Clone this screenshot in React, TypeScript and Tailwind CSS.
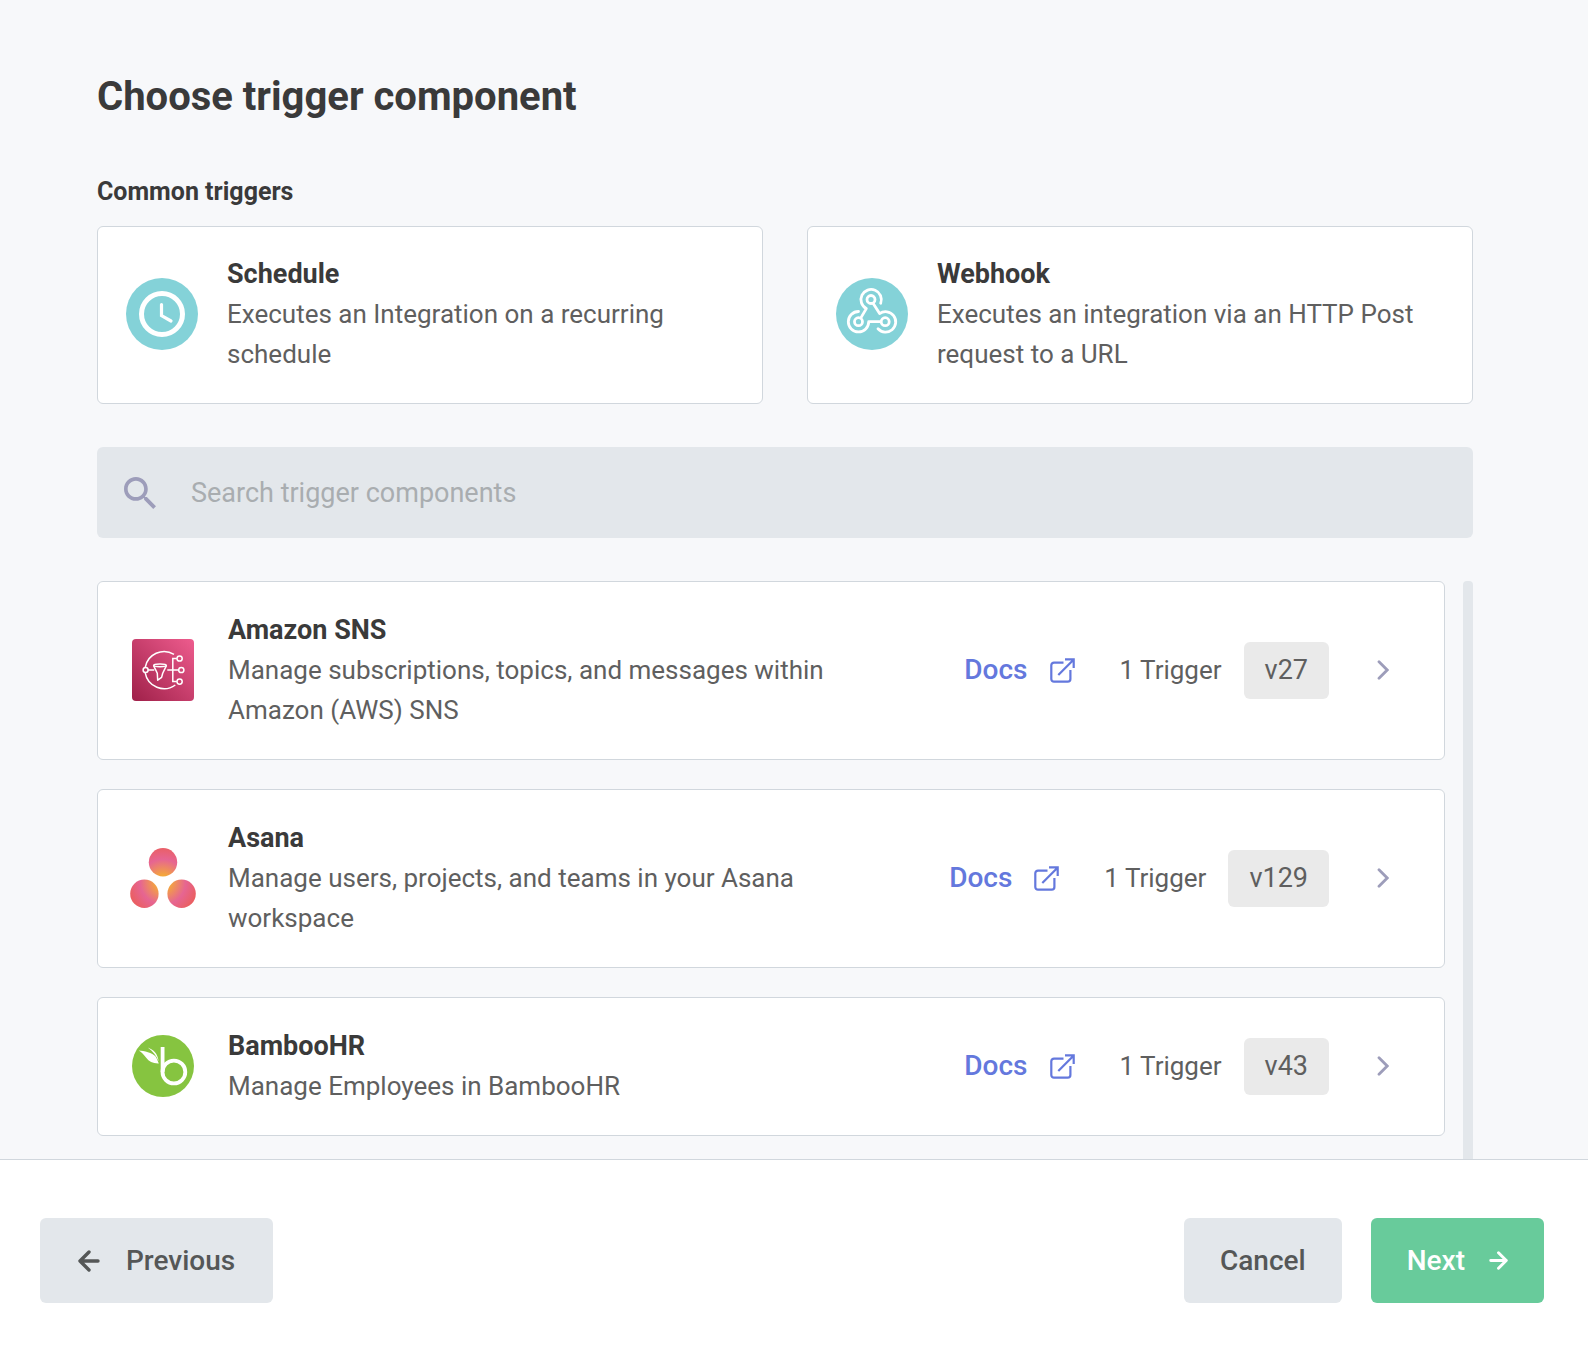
import type { ReactNode } from "react";

function ScheduleIcon() {
  return (
    <svg viewBox="0 0 72 72" className="size-[72px]" fill="none" aria-hidden="true">
      <circle cx="36" cy="36" r="36" fill="#84d2d8" />
      <circle cx="36" cy="36" r="20.5" stroke="#fff" strokeWidth="5" />
      <path d="M35.5 26.5V37.6L45 43" stroke="#fff" strokeWidth="3.2" strokeLinecap="round" />
    </svg>
  );
}

function WebhookIcon() {
  return (
    <svg viewBox="0 0 72 72" className="size-[72px]" fill="none" aria-hidden="true">
      <circle cx="36" cy="36" r="36" fill="#84d2d8" />
      <g stroke="#fff" strokeWidth="2.8" strokeLinecap="round" strokeLinejoin="round">
        <circle cx="35" cy="21.5" r="4" />
        <circle cx="22.5" cy="43.7" r="4" />
        <circle cx="49.2" cy="43.7" r="4" />
        <path d="M44.7 25.2A10.2 10.2 0 1 0 30.3 30.6L25 39.6" />
        <path d="M37.2 25.4L43.6 35.6A10.2 10.2 0 1 1 42 50.8" />
        <path d="M22.5 33.5A10.2 10.2 0 1 0 32.7 43.7H44.8" />
      </g>
    </svg>
  );
}

function SnsIcon() {
  return (
    <svg viewBox="0 0 62 62" className="size-[62px]" fill="none" aria-hidden="true">
      <defs>
        <linearGradient id="sns" x1="0" y1="62" x2="62" y2="0" gradientUnits="userSpaceOnUse">
          <stop stopColor="#9f2049" />
          <stop offset="1" stopColor="#ee5c8e" />
        </linearGradient>
      </defs>
      <rect width="62" height="62" rx="4" fill="url(#sns)" />
      <g stroke="#fff" strokeWidth="1.5">
        <path d="M42 15.3A19.2 19.2 0 0 0 13.2 28.4M13.2 33.8A19.2 19.2 0 0 0 43.3 46" />
        <circle cx="13.6" cy="31" r="2.5" />
        <path d="M16.1 31H22.3M35.3 31H46.5M44.8 19.5H40.8V42.6H44.8" />
        <circle cx="47.6" cy="19.5" r="2.6" />
        <circle cx="49.3" cy="31" r="2.6" />
        <circle cx="47.6" cy="42.6" r="2.6" />
        <ellipse cx="28" cy="26.3" rx="6.4" ry="1.4" />
        <path d="M21.6 26.6L25.3 34.3L25.7 41.2L29.6 38.4L30.7 34.3L34.4 26.6" strokeLinejoin="round" />
      </g>
    </svg>
  );
}

function AsanaIcon() {
  return (
    <svg viewBox="0 0 66 60" className="h-[60px] w-[66px]" aria-hidden="true">
      <defs>
        <radialGradient id="asana" cx="33" cy="34" r="35" gradientUnits="userSpaceOnUse">
          <stop stopColor="#fbb520" />
          <stop offset="0.2" stopColor="#f4a63c" />
          <stop offset="0.65" stopColor="#e66592" />
          <stop offset="1" stopColor="#ea5f63" />
        </radialGradient>
      </defs>
      <g fill="url(#asana)">
        <circle cx="33" cy="14.2" r="14.2" />
        <circle cx="14.4" cy="45.8" r="14.2" />
        <circle cx="51.6" cy="45.8" r="14.2" />
      </g>
    </svg>
  );
}

function BambooIcon() {
  return (
    <svg viewBox="0 0 62 62" className="size-[62px]" fill="none" aria-hidden="true">
      <circle cx="31" cy="31" r="31" fill="#86c440" />
      <path d="M30.6 12V37" stroke="#fff" strokeWidth="3.8" />
      <circle cx="41.9" cy="37" r="11.4" stroke="#fff" strokeWidth="3.8" />
      <path d="M6.8 15.4C12 16 20.5 17.2 23.6 21.5C25 23.6 25.6 26 26.8 28.4C21 28.6 17 26.6 14.2 22.8C12 19.7 9.8 17.2 6.8 15.4Z" fill="#fff" />
      <path d="M15.8 12.4C21.5 14.6 25.8 18.4 26.6 26.2C24.4 20.4 21 16.4 15.8 12.4Z" fill="#fff" />
    </svg>
  );
}

function SearchIcon() {
  return (
    <svg viewBox="3 3 17.5 17.5" className="size-8 shrink-0" fill="#9d9dba" aria-hidden="true">
      <path d="M15.5 14h-.79l-.28-.27C15.41 12.59 16 11.11 16 9.5 16 5.91 13.09 3 9.5 3S3 5.91 3 9.5 5.91 16 9.5 16c1.61 0 3.09-.59 4.23-1.57l.27.28v.79l5 4.99L20.49 19l-4.99-5zm-6 0C7.01 14 5 11.99 5 9.5S7.01 5 9.5 5 14 7.01 14 9.5 11.99 14 9.5 14z" />
    </svg>
  );
}

function ExternalIcon() {
  return (
    <svg viewBox="0 0 25 25" className="size-[25px]" fill="none" stroke="#6478dd" strokeWidth="2.2" aria-hidden="true">
      <path d="M13.5 4.6H4A2.7 2.7 0 0 0 1.3 7.3V21A2.7 2.7 0 0 0 4 23.7H17.7A2.7 2.7 0 0 0 20.4 21V12" />
      <path d="M8.3 17L23 2.2M15 1.3H23.7V10" />
    </svg>
  );
}

function ChevronIcon() {
  return (
    <svg viewBox="0 0 12 20" className="h-5 w-3" fill="none" stroke="#9d9dba" strokeWidth="2.8" strokeLinecap="round" aria-hidden="true">
      <path d="M2 1.8L10.2 10L2 18.2" />
    </svg>
  );
}

function ArrowIcon({ className }: { className: string }) {
  return (
    <svg viewBox="0 0 22 22" className={className} fill="none" stroke="currentColor" strokeWidth="3.4" strokeLinecap="round" strokeLinejoin="round" aria-hidden="true">
      <path d="M2 11H20M11 2L20 11L11 20" />
    </svg>
  );
}

const common = [
  { name: "Schedule", text: "Executes an Integration on a recurring schedule", icon: <ScheduleIcon /> },
  { name: "Webhook", text: "Executes an integration via an HTTP Post request to a URL", icon: <WebhookIcon /> },
];

const components = [
  { name: "Amazon SNS", text: "Manage subscriptions, topics, and messages within Amazon (AWS) SNS", version: "v27", icon: <SnsIcon /> },
  { name: "Asana", text: "Manage users, projects, and teams in your Asana workspace", version: "v129", icon: <AsanaIcon /> },
  { name: "BambooHR", text: "Manage Employees in BambooHR", version: "v43", icon: <BambooIcon /> },
];

function Summary({ icon, name, text }: { icon: ReactNode; name: string; text: string }) {
  return (
    <>
      <span className="flex w-[72px] shrink-0 justify-center">{icon}</span>
      <span className="block min-w-0 flex-1 text-[26px] leading-10">
        <strong className="block text-[27px] leading-10 font-bold text-[#3a3a3a]">{name}</strong>
        <span className="block max-w-[620px]">{text}</span>
      </span>
    </>
  );
}

export default function App() {
  return (
    <div className="flex h-screen flex-col bg-[#f7f8fa] font-['Roboto',sans-serif] text-[#5f5f5f]">
      <main className="flex min-h-0 flex-1 flex-col pt-[72px] pr-[115px] pl-[97px]">
        <h1 className="text-[40px] leading-[50px] font-bold text-[#3a3a3a]">Choose trigger component</h1>
        <h2 className="mt-[50px] text-[25px] leading-10 font-bold text-[#3a3a3a]">Common triggers</h2>
        <div className="mt-[14px] grid grid-cols-2 gap-11">
          {common.map((c) => (
            <button key={c.name} type="button" className="flex items-center gap-[29px] rounded-md border border-[#d1d7dd] bg-white px-7 pt-[27px] pb-[29px] text-left">
              <Summary {...c} />
            </button>
          ))}
        </div>
        <label className="mt-[43px] flex shrink-0 items-center gap-[35px] rounded-md bg-[#e3e7eb] px-[27px] py-[25px]">
          <SearchIcon />
          <input
            type="text"
            aria-label="Search trigger components"
            placeholder="Search trigger components"
            className="h-[41px] min-w-0 flex-1 bg-transparent text-[27px] outline-none placeholder:text-[#a9adb0]"
          />
        </label>
        <div className="mt-[43px] flex min-h-0 flex-1 gap-[18px]">
          <ul className="flex min-w-0 flex-1 flex-col gap-[29px] overflow-hidden">
            {components.map(({ version, ...c }) => (
              <li key={c.name} className="flex shrink-0 items-center rounded-md border border-[#d1d7dd] bg-white pt-7 pr-[55px] pb-[29px] pl-[29px]">
                <div className="flex min-w-0 flex-1 items-center gap-[29px]">
                  <Summary {...c} />
                </div>
                <a href="#docs" className="flex items-center gap-[22px] text-[28px] font-medium text-[#6478dd]">
                  Docs
                  <ExternalIcon />
                </a>
                <span className="ml-[45px] text-[26px]">1 Trigger</span>
                <span className="ml-[22px] rounded-md bg-[#eaeaea] px-[21px] py-2 text-[27px] leading-[41px]">{version}</span>
                <button type="button" aria-label={`Select ${c.name}`} className="ml-12">
                  <ChevronIcon />
                </button>
              </li>
            ))}
          </ul>
          <div className="w-[10px] rounded-t bg-[#e3e7eb]" />
        </div>
      </main>
      <footer className="flex items-center border-t border-[#d1d7dd] bg-white pt-[58px] pr-11 pb-[47px] pl-10 text-[28px] leading-[41px] font-medium text-[#555757]">
        <button type="button" className="flex items-center gap-[26px] rounded-md bg-[#e3e7eb] px-[38px] py-[22px]">
          <ArrowIcon className="size-[22px] rotate-180" />
          Previous
        </button>
        <button type="button" className="ml-auto rounded-md bg-[#e3e7eb] px-9 py-[22px]">Cancel</button>
        <button type="button" className="ml-[29px] flex items-center gap-6 rounded-md bg-[#68cb9b] px-9 py-[22px] text-white">
          Next
          <ArrowIcon className="size-[19px]" />
        </button>
      </footer>
    </div>
  );
}
